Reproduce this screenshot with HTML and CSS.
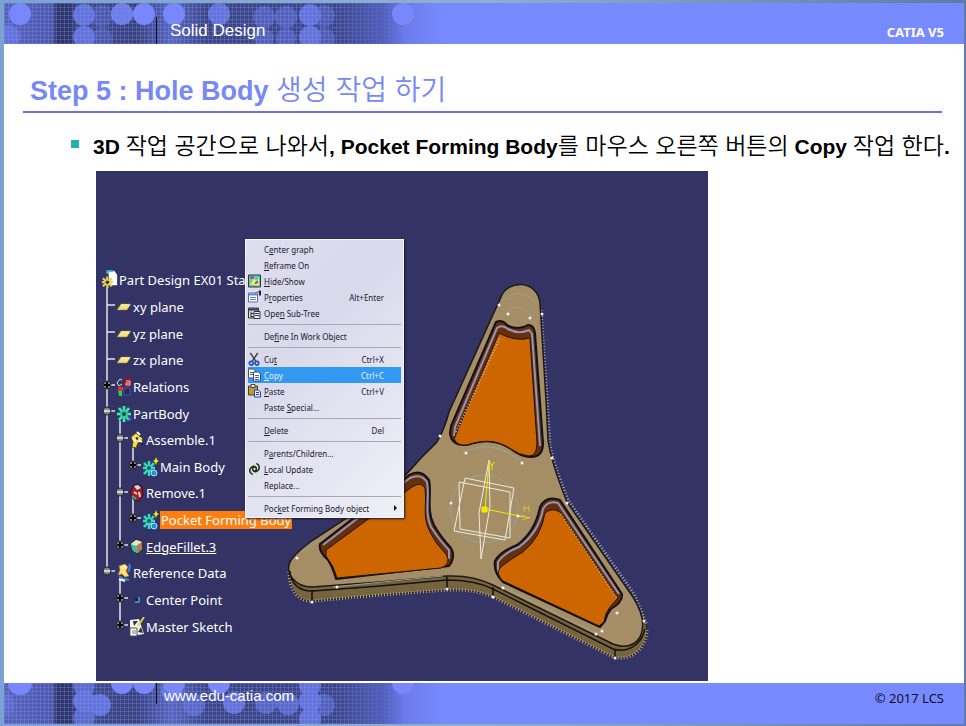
FILE: index.html
```
<!DOCTYPE html>
<html lang="ko">
<head>
  <meta charset="UTF-8" />
  <meta name="viewport" content="width=device-width, initial-scale=1.0"/>
  <title>Solid Design | CATIA V5</title>
  <link rel="stylesheet" href="styles.css">
</head>
<body>

  <!-- shared icons -->
  <svg class="defs" aria-hidden="true">
    <symbol id="i-plane" viewBox="0 0 16 16"><path d="M5 5h10l-4 6H1z" fill="#f6e27a" stroke="#8a7430" stroke-width=".6"/><path d="M5 6h8" stroke="#fffbd0"/></symbol>
    <symbol id="i-gear" viewBox="0 0 16 20"><path d="M8 2v16M3 4l10 12M13 4L3 16M1 10h14" stroke="#0b5a6e" stroke-width="4"/><path d="M8 2v16M3 4l10 12M13 4L3 16M1 10h14" stroke="#4fe0b0" stroke-width="2.500"/><circle cx="8" cy="10" r="4" fill="#38c88a"/><circle cx="8" cy="10" r="2" fill="#0a4a70"/><path d="M12 13l3 3" stroke="#2a7ad8" stroke-width="2"/></symbol>
    <symbol id="i-body" viewBox="0 0 16 20"><path d="M6 4v15M1 6l10 11M11 6L1 17M0 11h12" stroke="#0b4e8c" stroke-width="4"/><path d="M6 4v15M1 6l10 11M11 6L1 17M0 11h12" stroke="#45d8a8" stroke-width="2.4"/><circle cx="6" cy="11" r="2" fill="#15559c"/><circle cx="11" cy="16" r="3" fill="#2a88e8" stroke="#a8e8ff"/><path d="M13 0l1 3 2 1-2 1-1 3-1-3-2-1 2-1z" fill="#fff200"/></symbol>
    <symbol id="i-part" viewBox="0 0 18 22"><path d="M7 1h7l3 4v12H9z" fill="#fff"/><path d="M6 4V1h7" stroke="#35c8d0" stroke-width="2" fill="none"/><path d="M6 7v13M1 9l10 9M11 9L1 18M0 13.500h12" stroke="#e8d060" stroke-width="2.500"/><circle cx="6" cy="13.500" r="2" fill="#40350c"/></symbol>
    <symbol id="i-rel" viewBox="0 0 16 20"><path d="M4 2L1 6l2 3 3-2M4 2l2 1" stroke="#ddd" fill="none"/><path d="M8 1h7v8H8z" fill="#8c1826"/><path d="M10 4h4v4h-4V6h4" stroke="#ffb8b8" fill="none"/><path d="M2 10h5v4H2z" fill="#e03030"/><path d="M2 14h4v5H3z" fill="#20d050"/><path d="M8 11h6v7H8z" fill="#2a2a38" stroke="#3654d0"/></symbol>
    <symbol id="i-asm" viewBox="0 0 16 18"><path d="M2 6l5-4 3 3 4 2-2 4-3 1-2 5-4-1 1-5z" fill="#f4dc58" stroke="#5a4a10"/><path d="M8 1l3 3M10 9l3 2M4 8l3 2" stroke="#fff" stroke-width="2"/><path d="M7 7l2 1M12 13h2" stroke="#222" stroke-width="2"/></symbol>
    <symbol id="i-rem" viewBox="0 0 16 20"><path d="M4 3l5-2 4 3 1 8-4 6-5-1-4-7z" fill="#9c1c2c" stroke="#3a1018"/><path d="M5 3l4-1 3 3-4 2z" fill="#bfe8d0"/><path d="M5 9l3 2M10 9l1 5" stroke="#ffd0c0" stroke-width="2"/><path d="M3 13l4 3" stroke="#30b890" stroke-width="2"/></symbol>
    <symbol id="i-fil" viewBox="0 0 16 18"><path d="M1 6l6-5 6 2 1 8-6 5-5-3z" fill="#48b8a0" stroke="#222"/><path d="M2 6l5-4 6 2-6 4z" fill="#f0dcc0"/><path d="M8 8l5-4v7l-4 4z" fill="#c07848"/></symbol>
    <symbol id="i-ref" viewBox="0 0 16 20"><path d="M3 3l6-2 3 3-2 4 3 5-4 1-3-3-4 1 2-5z" fill="#ffe070" stroke="#a87820" stroke-width=".6"/><circle cx="8" cy="4" r="2" fill="#ffe8c0"/><path d="M13 1c2 3 0 6-1 8M3 13l5 3 5 1" stroke="#3a88d8" stroke-width="2" fill="none"/><path d="M3 16l6 2" stroke="#fff" stroke-width="2"/></symbol>
    <symbol id="i-pt" viewBox="0 0 16 16"><path d="M6 10h4V5" fill="none" stroke="#39a8e0" stroke-width="1.500"/><path d="M6 6h3v3H6z" fill="#10204c"/></symbol>
    <symbol id="i-sk" viewBox="0 0 16 20"><path d="M1 3l9-1 5 15-6 1-8-7z" fill="#f4f4f0"/><path d="M4 4h5l-4 5zM9 15l3-5 2 6z" fill="#333"/><path d="M15 0L9 9" stroke="#e0d040" stroke-width="2"/><path d="M1 11h7v8H1z" fill="#fff" stroke="#555"/><path d="M3 14h4M3 16h4" stroke="#777"/></symbol>

    <symbol id="m-show" viewBox="0 0 13 13"><path d="M.5.5h12v12H.5z" fill="#55cfc0" stroke="#333"/><path d="M2 10l4-6 3 3 2-4v8z" fill="#f8e860"/><path d="M2 3h4M7 9l3-2" stroke="#b03c60" stroke-width="2"/></symbol>
    <symbol id="m-prop" viewBox="0 0 13 13"><path d="M.5 2.500h9v9h-9z" fill="#fff" stroke="#5070b0"/><path d="M1 3h8v2H1z" fill="#5a8ae0"/><path d="M2 7h6M2 9h6" stroke="#7088b0"/><path d="M7 3l4-2 1 3" fill="#e8b898" stroke="#8a5040"/><path d="M11 0h2v5h-2z" fill="#102080"/></symbol>
    <symbol id="m-tree" viewBox="0 0 13 13"><path d="M.5 1.500h10v10H.5z" fill="#ddd" stroke="#333"/><path d="M1 2h9v2H1z" fill="#28306c"/><path d="M3 5v6M3 7h3M3 10h3" stroke="#333"/><path d="M6 5h6v7H6z" fill="#f0f0f0" stroke="#333"/><path d="M7 7h4M7 9h4" stroke="#28306c"/></symbol>
    <symbol id="m-cut" viewBox="0 0 13 15"><path d="M2 1l6 9M10 1L4 10" stroke="#444" stroke-width="1.600"/><circle cx="3" cy="12" r="2" fill="none" stroke="#1650c0" stroke-width="1.800"/><circle cx="9" cy="12" r="2" fill="none" stroke="#1650c0" stroke-width="1.800"/></symbol>
    <symbol id="m-copy" viewBox="0 0 13 13"><path d="M.5.500h5l2 2v7h-7z" fill="#f4f4f4" stroke="#555"/><path d="M2 4h3M2 6h3" stroke="#567"/><path d="M5.500 3.500h5l2 2v7h-7z" fill="#fff" stroke="#334a90"/><path d="M7 7h4M7 9h4M7 11h4" stroke="#4a60b0"/></symbol>
    <symbol id="m-paste" viewBox="0 0 13 13"><path d="M.5 1.500h9v9h-9z" fill="#b89c3c" stroke="#4c4018"/><path d="M3 0h4v3H3z" fill="#eee" stroke="#444"/><path d="M6.500 5.500h4l2 2v5h-6z" fill="#e8ecff" stroke="#2a3f98"/><path d="M8 8h3M8 10h3" stroke="#2a3f98"/></symbol>
    <symbol id="m-upd" viewBox="0 0 14 14"><circle cx="7" cy="7" r="6" fill="#e2f08c"/><path d="M9 6C8 4 5 5 5 7s2 4 5 2c3-2 3-6-1-8M5 8c1 2 4 1 4-1S7 3 4 5c-3 2-3 6 1 8" fill="none" stroke="#102060" stroke-width="1.600"/></symbol>
  </svg>

  <div class="slide">
    <header class="bar">
      <svg class="deco" viewBox="0 0 440 41" aria-hidden="true">
        <defs>
          <linearGradient id="fade"><stop offset="0" stop-color="#5864bc"/><stop offset=".11" stop-color="#4d58ac"/><stop offset=".12" stop-color="#2c3468"/><stop offset=".15" stop-color="#2c3468"/><stop offset=".17" stop-color="#424c90"/><stop offset=".3" stop-color="#38417c"/><stop offset=".38" stop-color="#5a67c0"/><stop offset=".46" stop-color="#3c4686"/><stop offset=".75" stop-color="#3b4588"/><stop offset=".86" stop-color="#5260bc"/><stop offset=".91" stop-color="#6b7bea"/><stop offset="1" stop-color="#788aff"/></linearGradient>
          <linearGradient id="mesh-fade"><stop offset="0" stop-color="#fff"/><stop offset=".75" stop-color="#fff"/><stop offset=".9" stop-color="#000"/></linearGradient>
          <pattern id="mesh" width="4" height="4" patternUnits="userSpaceOnUse"><path d="M0 .5h4M.5 0v4" stroke="#8796f0" stroke-opacity=".3"/></pattern>
          <mask id="mesh-mask"><path d="M0 0h440v41H0z" fill="url(#mesh-fade)"/></mask>
        </defs>
        <path d="M0 0h440v41H0z" fill="url(#fade)"/>
        <g fill="#6373dc">
          <circle cx="4" cy="34" r="12"/><circle cx="80" cy="12" r="11"/><circle cx="80" cy="34" r="11"/><circle cx="98" cy="13" r="11" opacity=".4"/><circle cx="98" cy="36" r="11" opacity=".4"/>
          <circle cx="215" cy="11" r="11"/><circle cx="260" cy="14" r="11" opacity=".6"/><circle cx="282" cy="14" r="11" opacity=".6"/><circle cx="306" cy="12" r="11"/><circle cx="306" cy="34" r="11"/><circle cx="320" cy="13" r="11" opacity=".5"/><circle cx="320" cy="36" r="11" opacity=".5"/><circle cx="260" cy="35" r="10" opacity=".6"/><circle cx="282" cy="35" r="10" opacity=".6"/>
        </g>
        <path d="M0 0h440v41H0z" fill="url(#mesh)" mask="url(#mesh-mask)"/>
        <g fill="#7888fc"><circle cx="16" cy="11" r="11"/><circle cx="118" cy="11" r="11" opacity=".85"/><circle cx="140" cy="11" r="11"/><circle cx="170" cy="11" r="11"/><circle cx="399" cy="11" r="11"/></g>
      </svg>
      <span class="course">Solid Design</span>
      <strong class="product">CATIA V5</strong>
    </header>

    <main>
      <h1>Step 5 : Hole Body <span class="ko">생성 작업 하기</span></h1>
      <ul class="points">
        <li>3D <span class="ko">작업 공간으로 나와서</span>, Pocket Forming Body<span class="ko">를 마우스 오른쪽 버튼의</span> Copy <span class="ko">작업 한다</span>.</li>
      </ul>

      <div class="viewport">
        <svg class="scene" viewBox="96 171 612 510" aria-hidden="true">
          <!-- side faces -->
          <path d="M289 567C288 588 298 602 313 601L380 595 447 590Q475 589 493 597L523 612 613 657C630 662 646 650 647 630L644 615 493 575Z" fill="#75643f" stroke="#201a10"/>
          <path d="M289 572C289 590 298 602 313 601L380 595 447 590Q475 589 493 597L523 612 613 657C630 662 646 650 647 630" fill="none" stroke="#b8ab8c" stroke-width="3" stroke-dasharray="1 2"/>
          <path d="M541 310L547 400 550 445Q552 460 568 500L634 594 647 625" fill="none" stroke="#a4adb4" stroke-width="3" stroke-dasharray="1 2"/>
          <!-- top face -->
          <path d="M501 297C507 280 537 279 540 303L546 400 548 440Q551 462 567 502L633 597Q648 621 640 637C634 647 623 648 613 644L523 600 493 585Q473 575 447 576L380 582 312 587C294 587 287 573 289 565Q291 556 313 540L347 518 395 485Q411 470 420 459L437 442Q445 428 449 412Z" fill="#a58e65" stroke="#1c1812" stroke-width="1.500"/>
          <path d="M290 571C290 583 300 592 313 591L380 586 447 580Q475 580 493 589L523 604 613 649C627 653 641 646 645 629" fill="none" stroke="#17130d" stroke-width="1.500"/>
          <path d="M312 590v11M447 577v12M493 587v10M615 649v9" stroke="#111" stroke-width="1.500"/>

          <!-- upper pocket -->
          <g stroke-linejoin="round">
            <path d="M496 322Q502 319 507 325 518 331 528 325 534 325 535 333L543 443Q543 457 531 457 521 457 511 449C493 437 477 442 467 445Q451 446 450 433L451 426Z" fill="#682f08" stroke="#121018" stroke-width="2"/>
            <path d="M454 436L455 427 497 328Q502 324 508 329 519 335 529 330L532 334 540 446" fill="none" stroke="#8f96bd" stroke-width="2"/>
            <path d="M499 333Q515 342 530 338L537 443Q537 456 529 456 519 455 511 449C493 437 477 442 467 445Q457 446 454 439Z" fill="#cd6600" stroke="#17130d"/>
            <path d="M456 432L500 338" stroke="#c0b8a8" stroke-width="2" stroke-dasharray="1 2"/>
            <!-- left pocket -->
            <path d="M320 544L409 475Q421 468 429 480C432 493 426 510 434 525Q440 536 451 548 456 557 449 566L336 579Q333 568 328 560 318 551 320 544Z" fill="#682f08" stroke="#121018" stroke-width="2"/>
            <path d="M323 545L410 478Q421 473 427 482C430 499 424 512 431 527Q440 541 449 550V559" fill="none" stroke="#8f96bd" stroke-width="2"/>
            <path d="M326 550L412 487Q421 481 425 488C427 505 422 517 430 532Q435 543 446 554 452 564 441 568L337 578Q334 566 326 556Z" fill="#cd6600" stroke="#17130d"/>
            <!-- right pocket -->
            <path d="M540 507Q546 495 560 500L622 594Q623 602 611 609 607 614 605 621L600 627 503 582Q493 572 495 561 499 552 517 545 535 532 540 507Z" fill="#682f08" stroke="#121018" stroke-width="2"/>
            <path d="M498 572V562Q504 553 519 547 539 532 543 509 548 500 558 503L619 594" fill="none" stroke="#8f96bd" stroke-width="2"/>
            <path d="M500 568Q506 562 523 552 541 537 545 513 552 507 560 512L618 598 610 607Q605 613 604 622L599 626 503 581Q495 573 500 568Z" fill="#cd6600" stroke="#17130d"/>
            <path d="M561 514L617 598" stroke="#c8b890" stroke-width="1.500" stroke-dasharray="1 2"/>
          </g>

          <!-- construction curves -->
          <g fill="none" stroke="#9da09a">
            <path d="M504 300Q517 287 535 300M507 313Q518 300 531 315M463 452Q494 438 522 462M320 540L302 552"/>
            <circle cx="484" cy="509" r="34"/>
            <path d="M333 587L443 576M501 586L597 634"/>
          </g>
          <g fill="none" stroke="#f1ebdf">
            <path d="M465 478L514 488 505 540 454 531ZM459 482L510 492V538L460 529Z"/>
            <path d="M489 460L490 506 481 559 479 513Z"/>
          </g>
          <g stroke="#f2eb00" fill="none">
            <path d="M485 509L489 462M485 509L530 518M490 462l2 4 2-4M492 466v4"/>
            <path d="M524 505v7M529 505v7M524 508h5M522 515l6 3-6 2" stroke="#d0c428"/>
            <path d="M482 507h5v5h-5z" fill="#f2eb00"/>
          </g>
          <g fill="#f3f3f3">
            <circle cx="508" cy="314" r="1.500"/><circle cx="530" cy="318" r="1.500"/><circle cx="542" cy="314" r="1.500"/><circle cx="499" cy="305" r="1.500"/><circle cx="440" cy="436" r="1.500"/><circle cx="466" cy="453" r="1.500"/><circle cx="522" cy="463" r="1.500"/><circle cx="552" cy="458" r="1.500"/><circle cx="451" cy="503" r="1.500"/><circle cx="518" cy="516" r="1.500"/><circle cx="567" cy="503" r="1.500"/><circle cx="297" cy="558" r="1.500"/><circle cx="312" cy="602" r="1.500"/><circle cx="337" cy="587" r="1.500"/><circle cx="447" cy="589" r="1.500"/><circle cx="493" cy="597" r="1.500"/><circle cx="503" cy="588" r="1.500"/><circle cx="596" cy="634" r="1.500"/><circle cx="617" cy="613" r="1.500"/><circle cx="602" cy="631" r="1.500"/><circle cx="644" cy="621" r="1.500"/><circle cx="615" cy="658" r="1.500"/>
          </g>

          <!-- tree branches -->
          <path d="M107 288V571M107 305h8M107 332h8M107 359h8M107 385h8M107 411h8M107 571h8M120 420V545M120 438h8M120 492h8M120 545h8M133 446V465h8M133 498V518h8M120 580V625M120 598h8M120 625h8" fill="none" stroke="#e4e4ec" stroke-width="1.500"/>
          <g fill="#84848c" stroke="#25252c">
            <circle cx="107" cy="385" r="4"/><circle cx="107" cy="411" r="4"/><circle cx="120" cy="438" r="4"/><circle cx="133" cy="465" r="4"/><circle cx="120" cy="492" r="4"/><circle cx="133" cy="518" r="4"/><circle cx="120" cy="545" r="4"/><circle cx="107" cy="571" r="4"/><circle cx="120" cy="598" r="4"/><circle cx="120" cy="625" r="4"/>
          </g>
          <path d="M104 385h6M107 382v6M130 465h6M133 462v6M130 518h6M133 515v6M117 545h6M120 542v6M117 598h6M120 595v6M117 625h6M120 622v6" stroke="#000" stroke-width="2"/>
          <path d="M104 411h6M117 438h6M117 492h6M104 571h6" stroke="#eee" stroke-width="1.500"/>
        </svg>

        <ul class="tree">
          <li class="d0"><svg><use href="#i-part"/></svg><span>Part Design EX01 Start</span></li>
          <li class="d1"><svg><use href="#i-plane"/></svg><span>xy plane</span></li>
          <li class="d1"><svg><use href="#i-plane"/></svg><span>yz plane</span></li>
          <li class="d1"><svg><use href="#i-plane"/></svg><span>zx plane</span></li>
          <li class="d1"><svg><use href="#i-rel"/></svg><span>Relations</span></li>
          <li class="d1"><svg><use href="#i-gear"/></svg><span>PartBody</span></li>
          <li class="d2"><svg><use href="#i-asm"/></svg><span>Assemble.1</span></li>
          <li class="d3"><svg><use href="#i-body"/></svg><span>Main Body</span></li>
          <li class="d2"><svg><use href="#i-rem"/></svg><span>Remove.1</span></li>
          <li class="d3"><svg><use href="#i-body"/></svg><span class="picked">Pocket Forming Body</span></li>
          <li class="d2"><svg><use href="#i-fil"/></svg><span class="current">EdgeFillet.3</span></li>
          <li class="d1"><svg><use href="#i-ref"/></svg><span>Reference Data</span></li>
          <li class="d2"><svg><use href="#i-pt"/></svg><span>Center Point</span></li>
          <li class="d2"><svg><use href="#i-sk"/></svg><span>Master Sketch</span></li>
        </ul>

        <div class="menu" role="menu">
          <button role="menuitem"><span>C<u>e</u>nter graph</span></button>
          <button role="menuitem"><span><u>R</u>eframe On</span></button>
          <button role="menuitem"><svg><use href="#m-show"/></svg><span><u>H</u>ide/Show</span></button>
          <button role="menuitem"><svg><use href="#m-prop"/></svg><span>P<u>r</u>operties</span><kbd>Alt+Enter</kbd></button>
          <button role="menuitem"><svg><use href="#m-tree"/></svg><span>Ope<u>n</u> Sub-Tree</span></button>
          <hr>
          <button role="menuitem"><span>De<u>f</u>ine In Work Object</span></button>
          <hr>
          <button role="menuitem"><svg><use href="#m-cut"/></svg><span>Cu<u>t</u></span><kbd>Ctrl+X</kbd></button>
          <button role="menuitem" class="active"><svg><use href="#m-copy"/></svg><span><u>C</u>opy</span><kbd>Ctrl+C</kbd></button>
          <button role="menuitem"><svg><use href="#m-paste"/></svg><span><u>P</u>aste</span><kbd>Ctrl+V</kbd></button>
          <button role="menuitem"><span>Paste <u>S</u>pecial...</span></button>
          <hr>
          <button role="menuitem"><span><u>D</u>elete</span><kbd>Del</kbd></button>
          <hr>
          <button role="menuitem"><span>P<u>a</u>rents/Children...</span></button>
          <button role="menuitem"><svg><use href="#m-upd"/></svg><span><u>L</u>ocal Update</span></button>
          <button role="menuitem"><span>Replace...</span></button>
          <hr>
          <button role="menuitem" class="more"><span>Poc<u>k</u>et Forming Body object</span></button>
        </div>
      </div>
    </main>

    <footer class="bar">
      <svg class="deco" viewBox="0 0 440 41" aria-hidden="true">
        <path d="M0 0h440v41H0z" fill="url(#fade)"/>
        <g fill="#6373dc">
          <circle cx="0" cy="22" r="11" opacity=".6"/><circle cx="80" cy="2" r="11" opacity=".8"/><circle cx="80" cy="18" r="11"/><circle cx="80" cy="35" r="11" opacity=".8"/><circle cx="96" cy="22" r="11"/>
          <circle cx="168" cy="8" r="11"/><circle cx="190" cy="22" r="11" opacity=".7"/><circle cx="230" cy="20" r="11"/><circle cx="262" cy="20" r="11" opacity=".7"/><circle cx="284" cy="21" r="11" opacity=".8"/><circle cx="306" cy="2" r="11"/><circle cx="306" cy="18" r="11"/><circle cx="306" cy="36" r="11"/><circle cx="320" cy="22" r="11" opacity=".6"/>
        </g>
        <path d="M0 0h440v41H0z" fill="url(#mesh)" mask="url(#mesh-mask)"/>
        <g fill="#7888fc"><circle cx="16" cy="0" r="12"/><circle cx="118" cy="0" r="11"/><circle cx="140" cy="0" r="11"/><circle cx="170" cy="0" r="11"/><circle cx="215" cy="0" r="11"/><circle cx="399" cy="0" r="11"/></g>
      </svg>
      <a class="site" href="http://www.edu-catia.com">www.edu-catia.com</a>
      <span class="copyright">© 2017 LCS</span>
    </footer>
  </div>

</body>
</html>
```
FILE: styles.css
```
:root {
  --bar: #788aff;
  --rule: #6c6ff0;
  --scene: #333366;
  --pick: #ff7f0e;
}

* {
  margin: 0;
  padding: 0;
  box-sizing: border-box;
}

body {
  font-family: "Liberation Sans", Arial, "Noto Sans CJK KR", sans-serif;
  background: linear-gradient(90deg, #7ba2d2, #8eb0cf 50%, #5f7ba8);
}

.defs {
  position: absolute;
  width: 0;
  height: 0;
}

.slide {
  min-height: 100vh;
  display: flex;
  flex-direction: column;
  padding: 3px 2px 2px 4px;
}

.bar {
  position: relative;
  display: flex;
  justify-content: space-between;
  align-items: center;
  height: 41px;
  padding-right: 20px;
  background: var(--bar);
  color: #fff;
}

.deco {
  position: absolute;
  left: 0;
  top: 0;
  width: 440px;
  height: 41px;
}

.course,
.site {
  position: relative;
  margin-left: 152px;
  border-left: 1px solid #111;
  color: #fff;
  text-decoration: none;
}

.course {
  align-self: flex-end;
  padding-left: 13px;
  font-size: 17px;
  line-height: 27px;
}

.site {
  align-self: flex-start;
  padding: 5px 0 0 7px;
  font-size: 15px;
  line-height: 16px;
}

.product {
  padding-top: 16px;
  font: bold 13px "Noto Sans", sans-serif;
}

.copyright {
  padding-bottom: 12px;
  color: #10102c;
  font: 13px "Noto Sans", sans-serif;
}

main {
  flex: 1;
  background: #fff;
}

.ko {
  font-family: "Noto Sans CJK KR", sans-serif;
  font-weight: 350;
  line-height: 1;
}

h1 {
  margin: 29px 22px 0 19px;
  padding: 0 0 2px 7px;
  border-bottom: 2px solid var(--rule);
  color: #7788f8;
  font-size: 27px;
  line-height: 36px;
}

.points {
  margin: 20px 0 10px 67px;
  list-style: none;
  font-size: 21px;
  font-weight: bold;
  line-height: 28px;
  white-space: nowrap;
}

.points li {
  position: relative;
  height: 28px;
  padding-left: 22px;
}

.points li::before {
  content: "";
  position: absolute;
  left: 0;
  top: 7px;
  width: 8px;
  height: 8px;
  background: #24b0b0;
}

h1 .ko {
  font-size: 28px;
}

.points .ko {
  font-size: 23px;
}

.viewport {
  position: relative;
  width: 612px;
  max-width: 100%;
  margin: 0 0 2px 92px;
  padding: 96px 0 41px 6px;
  background: var(--scene);
  overflow: hidden;
}

.scene {
  position: absolute;
  left: 0;
  top: 0;
  width: 612px;
  height: 510px;
}

.tree {
  position: relative;
  display: grid;
  grid-auto-rows: 1fr;
  height: 373px;
  list-style: none;
  color: #fff;
  font: 13px "Noto Sans", sans-serif;
}

.tree li {
  display: flex;
  align-items: center;
  gap: 1px;
}

.tree svg {
  width: 16px;
  height: 20px;
}

.tree .d1 { padding-left: 14px; }
.tree .d2 { padding-left: 27px; }
.tree .d3 { padding-left: 41px; }

.tree .picked {
  padding: 0 1px;
  background: var(--pick);
}

.tree .current {
  text-decoration: underline;
}

.menu {
  position: absolute;
  left: 149px;
  top: 68px;
  width: 159px;
  padding: 1px 2px;
  background: linear-gradient(135deg, #dedef0, #d9d9ec 35%, #f0f0f8);
  border: 1px solid #f4f4fa;
  box-shadow: 1px 1px 2px #15152c;
}

.menu button {
  display: grid;
  grid-template-columns: 16px 1fr auto;
  align-items: center;
  width: 100%;
  height: 16px;
  padding-right: 17px;
  border: 0;
  background: none;
  color: #202028;
  font: 8px "Noto Sans", sans-serif;
  text-align: left;
  white-space: nowrap;
}

.menu button span { grid-column: 2; }

.menu button svg {
  grid-row: 1;
  width: 13px;
  height: 14px;
}

.menu kbd { font: inherit; }

.menu .active {
  background: #3399f0;
  color: #e4f2ff;
}

.menu .more {
  padding-right: 4px;
}

.menu .more::after {
  content: "";
  border: 3px solid transparent;
  border-left-color: #111;
  border-right-width: 0;
}

.menu hr {
  height: 1px;
  margin: 3px 0;
  border: 0;
  background: #a8a8b4;
}
```
